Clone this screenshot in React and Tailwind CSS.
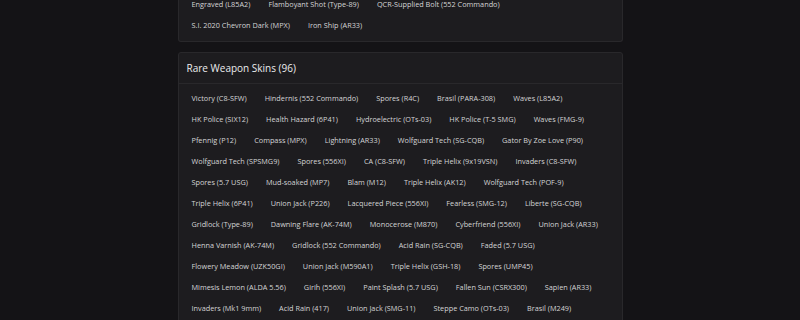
import React from 'react';

const commonRows = [
  ['Engraved (L85A2)', 'Flamboyant Shot (Type-89)', 'QCR-Supplied Bolt (552 Commando)'],
  ['S.I. 2020 Chevron Dark (MPX)', 'Iron Ship (AR33)'],
];

const rareRows = [
  ['Victory (C8-SFW)', 'Hindernis (552 Commando)', 'Spores (R4C)', 'Brasil (PARA-308)', 'Waves (L85A2)'],
  ['HK Police (SIX12)', 'Health Hazard (6P41)', 'Hydroelectric (OTs-03)', 'HK Police (T-5 SMG)', 'Waves (FMG-9)'],
  ['Pfennig (P12)', 'Compass (MPX)', 'Lightning (AR33)', 'Wolfguard Tech (SG-CQB)', 'Gator By Zoe Love (P90)'],
  ['Wolfguard Tech (SPSMG9)', 'Spores (556XI)', 'CA (C8-SFW)', 'Triple Helix (9x19VSN)', 'Invaders (C8-SFW)'],
  ['Spores (5.7 USG)', 'Mud-soaked (MP7)', 'Blam (M12)', 'Triple Helix (AK12)', 'Wolfguard Tech (POF-9)'],
  ['Triple Helix (6P41)', 'Union Jack (P226)', 'Lacquered Piece (556XI)', 'Fearless (SMG-12)', 'Liberte (SG-CQB)'],
  ['Gridlock (Type-89)', 'Dawning Flare (AK-74M)', 'Monocerose (M870)', 'Cyberfriend (556XI)', 'Union Jack (AR33)'],
  ['Henna Varnish (AK-74M)', 'Gridlock (552 Commando)', 'Acid Rain (SG-CQB)', 'Faded (5.7 USG)'],
  ['Flowery Meadow (UZK50GI)', 'Union Jack (M590A1)', 'Triple Helix (GSH-18)', 'Spores (UMP45)'],
  ['Mimesis Lemon (ALDA 5.56)', 'Girih (556XI)', 'Paint Splash (5.7 USG)', 'Fallen Sun (CSRX300)', 'Sapien (AR33)'],
  ['Invaders (Mk1 9mm)', 'Acid Rain (417)', 'Union Jack (SMG-11)', 'Steppe Camo (OTs-03)', 'Brasil (M249)'],
];

const SkinList = ({ rows }) => (
  <div className="flex flex-col px-[4px]">
    {rows.map((row, i) => (
      <div key={i} className="flex">
        {row.map((name) => (
          <span key={name} className="h-[21px] px-[9px] flex items-center whitespace-nowrap text-[7.3px] text-[#d4d4d6]">
            {name}
          </span>
        ))}
      </div>
    ))}
  </div>
);

export default function App() {
  return (
    <div className="h-[320px] overflow-hidden bg-[#141316] flex flex-col items-center" style={{ fontFamily: '"Open Sans", sans-serif' }}>
      {/* Common skins card, scrolled past its header */}
      <div className="w-[445px] mt-[-10px] bg-[#1d1c1f] border border-t-0 border-[#29282b] rounded-b-[3px] pt-[4px] pb-[5px]">
        <SkinList rows={commonRows} />
      </div>

      <div className="w-[445px] mt-[10px] bg-[#1d1c1f] border border-[#29282b] rounded-[3px]">
        <div className="h-[31px] px-[8px] flex items-center border-b border-[#29282b]">
          <h2 className="text-[10px] font-medium text-[#ececee]">Rare Weapon Skins (96)</h2>
        </div>
        <div className="pt-[4px] pb-[5px]">
          <SkinList rows={rareRows} />
        </div>
      </div>
    </div>
  );
}
